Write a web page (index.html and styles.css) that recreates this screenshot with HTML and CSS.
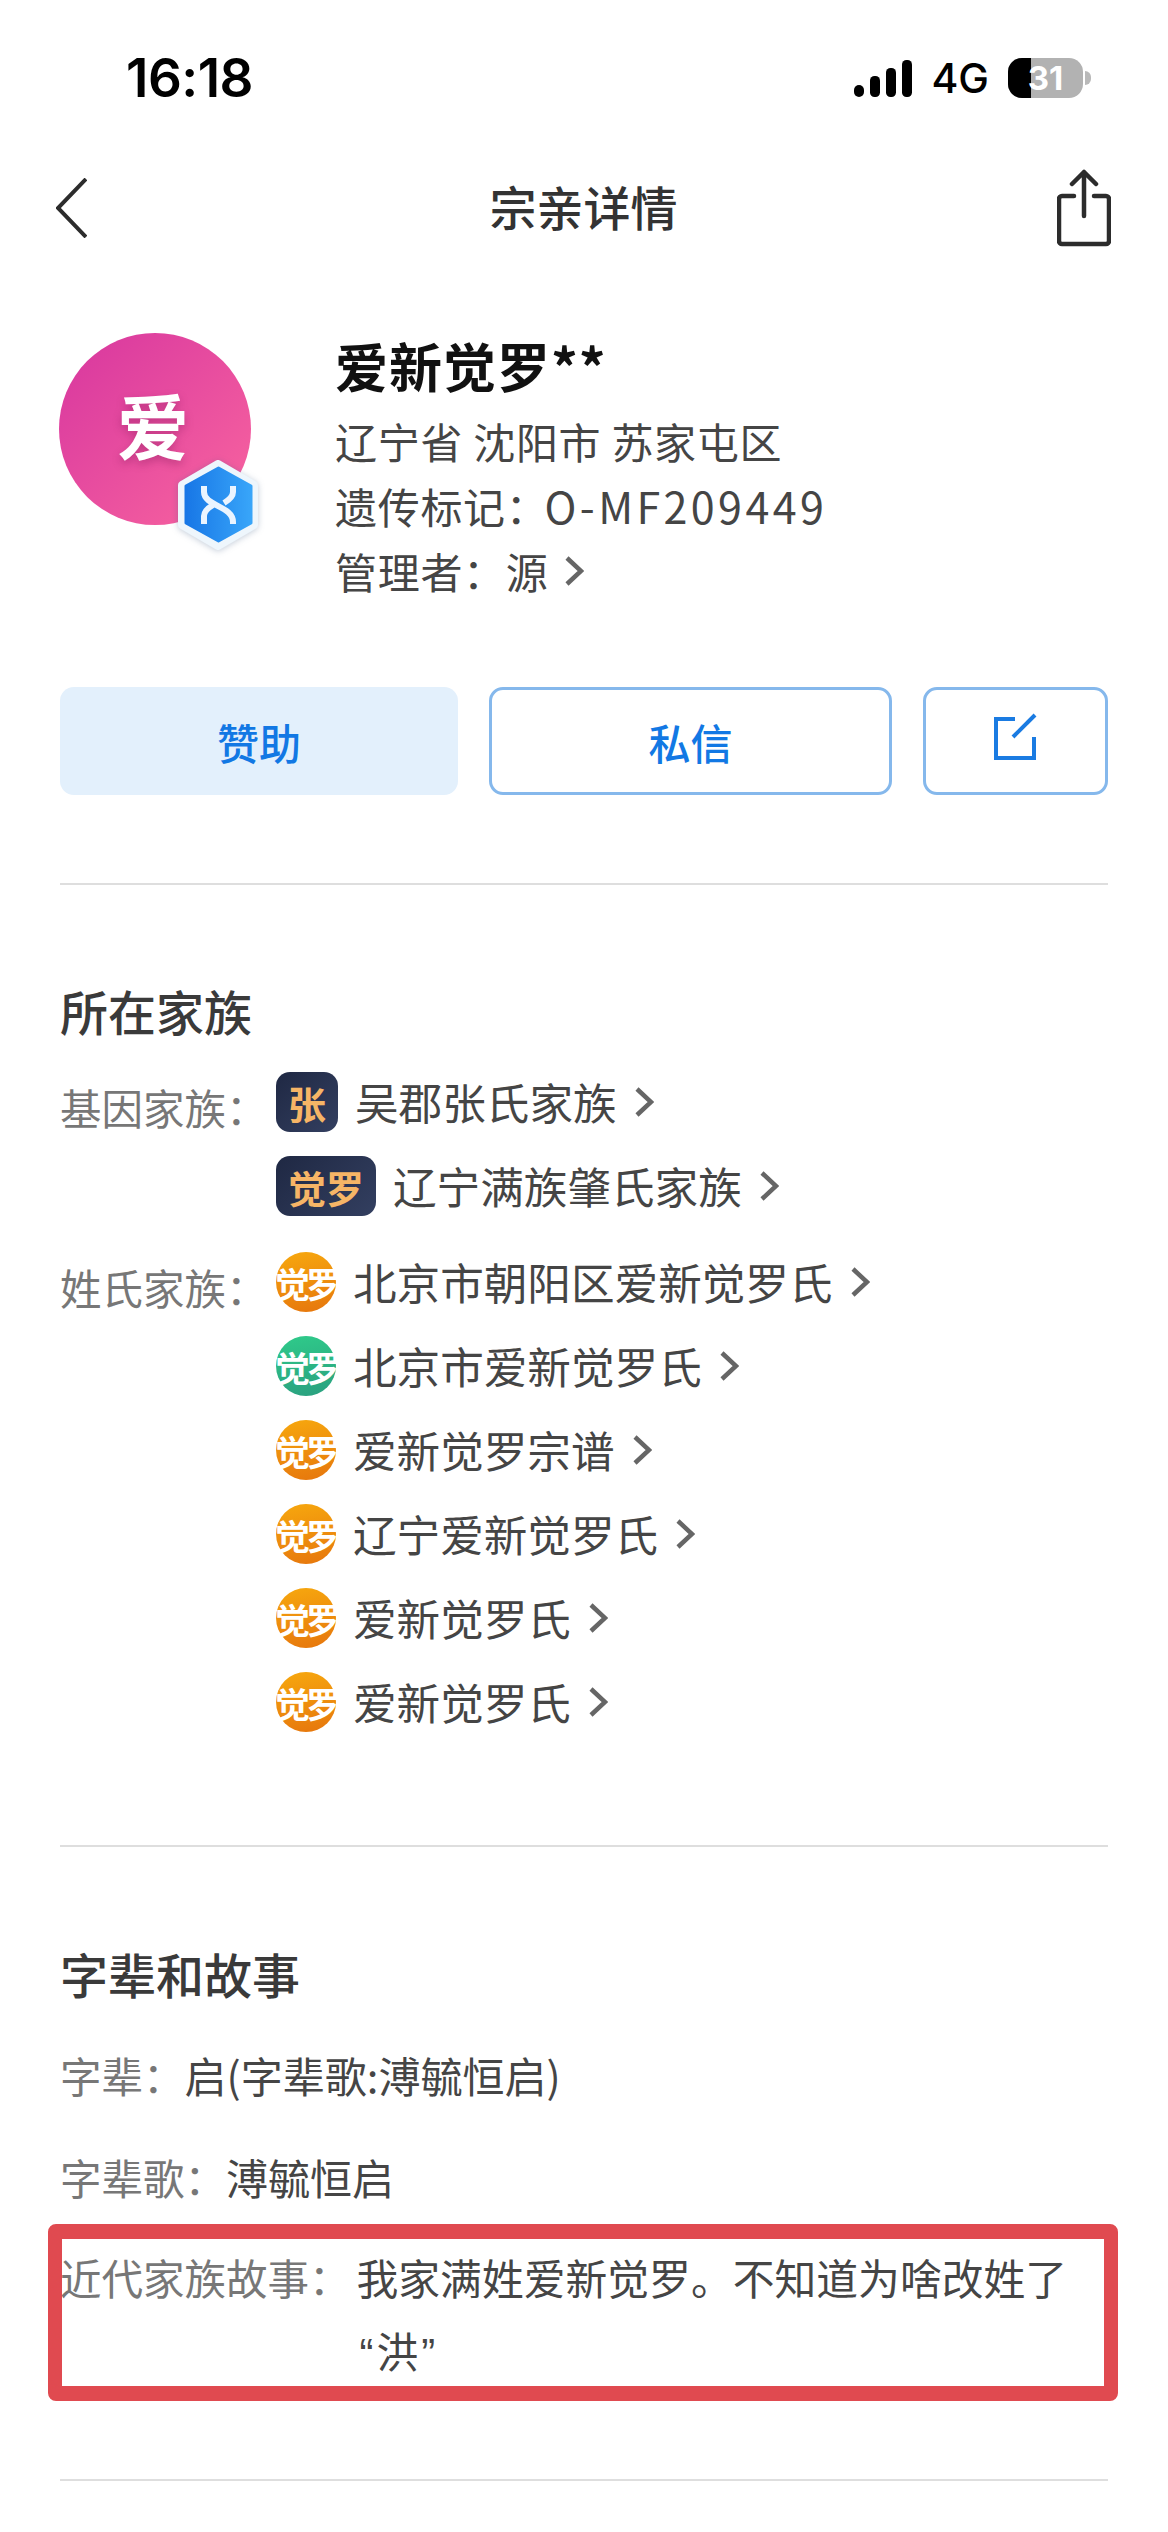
FILE: index.html
```html
<!DOCTYPE html>
<html lang="zh-CN">
<head>
  <meta charset="UTF-8">
  <meta name="viewport" content="width=device-width, initial-scale=1.0">
  <title>宗亲详情</title>
  <link rel="stylesheet" href="styles.css">
</head>
<body>
  <div class="status_bar">
    <span class="time">16:18</span>
    <div class="status_right">
      <svg class="signal" width="58" height="37" viewBox="0 0 58 37">
        <rect x="0" y="25" width="10" height="12" rx="5"/>
        <rect x="16" y="16" width="10" height="21" rx="4.5"/>
        <rect x="32" y="8" width="10" height="29" rx="4.5"/>
        <rect x="48" y="0" width="10" height="37" rx="4.5"/>
      </svg>
      <span class="net">4G</span>
      <div class="battery">
        <div class="battery_fill"></div>
        <span class="battery_num">31</span>
      </div>
      <span class="battery_nub"></span>
    </div>
  </div>

  <div class="nav">
    <svg class="back" width="31" height="60" viewBox="0 0 31 60">
      <polyline points="30,1 2,30 30,59"/>
    </svg>
    <h1 class="nav_title">宗亲详情</h1>
    <svg class="share" width="54" height="78" viewBox="0 0 54 78">
      <path d="M17 27H5a3 3 0 0 0-3 3v42a3 3 0 0 0 3 3h44a3 3 0 0 0 3-3V30a3 3 0 0 0-3-3H37"/>
      <path d="M27 3v44M15 15L27 3l12 12"/>
    </svg>
  </div>

  <div class="profile">
    <div class="avatar">
      <span class="avatar_text">爱</span>
      <svg class="avatar_badge" width="80" height="90" viewBox="0 0 80 90">
        <defs>
          <linearGradient id="hexBlue" x1="0" y1="0" x2="1" y2="0">
            <stop offset="0" stop-color="#1877e6"/>
            <stop offset="1" stop-color="#38a5f9"/>
          </linearGradient>
        </defs>
        <polygon class="hex_out" points="40,4 76,25 76,65 40,86 4,65 4,25"/>
        <polygon class="hex_in" points="40.5,8 73,26 73,63 40.5,81 8,63 8,26"/>
        <path class="hex_dna" d="M26 26v6c0 14 29 14 29 30v2"/>
        <path class="hex_dna" d="M55 26v6c0 5-4 8-9 11M26 64v-8c0-5 4-8 9-11"/>
      </svg>
    </div>
    <div class="info">
      <div class="name">爱新觉罗**</div>
      <div class="info_line first">辽宁省 沈阳市 苏家屯区</div>
      <div class="info_line">遗传标记：<span class="code">O-MF209449</span></div>
      <div class="info_line"><span>管理者：源</span><svg class="arrow" width="20" height="30" viewBox="0 0 20 30"><polyline points="3,2 17,15 3,28"/></svg></div>
    </div>
  </div>

  <div class="actions">
    <a class="btn btn_fill">赞助</a>
    <a class="btn btn_line btn_grow">私信</a>
    <a class="btn btn_line btn_icon">
      <svg width="44" height="48" viewBox="0 0 44 48">
        <path d="M21 6H2v39h38V24"/>
        <path d="M41 2L19 24"/>
      </svg>
    </a>
  </div>

  <div class="line line_first"></div>

  <h2 class="section_title">所在家族</h2>

  <div class="family_group gene">
    <div class="label">基因家族：</div>
    <div class="family_list">
      <div class="family_row">
        <span class="tag">张</span>
        <span class="family_name">吴郡张氏家族</span>
        <svg class="arrow" width="20" height="30" viewBox="0 0 20 30"><polyline points="3,2 17,15 3,28"/></svg>
      </div>
      <div class="family_row">
        <span class="tag">觉罗</span>
        <span class="family_name">辽宁满族肇氏家族</span>
        <svg class="arrow" width="20" height="30" viewBox="0 0 20 30"><polyline points="3,2 17,15 3,28"/></svg>
      </div>
    </div>
  </div>

  <div class="family_group surname">
    <div class="label">姓氏家族：</div>
    <div class="family_list">
      <div class="family_row">
        <span class="seal">觉罗</span>
        <span class="family_name">北京市朝阳区爱新觉罗氏</span>
        <svg class="arrow" width="20" height="30" viewBox="0 0 20 30"><polyline points="3,2 17,15 3,28"/></svg>
      </div>
      <div class="family_row">
        <span class="seal seal_green">觉罗</span>
        <span class="family_name">北京市爱新觉罗氏</span>
        <svg class="arrow" width="20" height="30" viewBox="0 0 20 30"><polyline points="3,2 17,15 3,28"/></svg>
      </div>
      <div class="family_row">
        <span class="seal">觉罗</span>
        <span class="family_name">爱新觉罗宗谱</span>
        <svg class="arrow" width="20" height="30" viewBox="0 0 20 30"><polyline points="3,2 17,15 3,28"/></svg>
      </div>
      <div class="family_row">
        <span class="seal">觉罗</span>
        <span class="family_name">辽宁爱新觉罗氏</span>
        <svg class="arrow" width="20" height="30" viewBox="0 0 20 30"><polyline points="3,2 17,15 3,28"/></svg>
      </div>
      <div class="family_row">
        <span class="seal">觉罗</span>
        <span class="family_name">爱新觉罗氏</span>
        <svg class="arrow" width="20" height="30" viewBox="0 0 20 30"><polyline points="3,2 17,15 3,28"/></svg>
      </div>
      <div class="family_row">
        <span class="seal">觉罗</span>
        <span class="family_name">爱新觉罗氏</span>
        <svg class="arrow" width="20" height="30" viewBox="0 0 20 30"><polyline points="3,2 17,15 3,28"/></svg>
      </div>
    </div>
  </div>

  <div class="line line_second"></div>

  <h2 class="section_title second">字辈和故事</h2>

  <div class="text_row"><span class="label">字辈：</span><span class="value">启(字辈歌:溥毓恒启)</span></div>
  <div class="text_row"><span class="label">字辈歌：</span><span class="value">溥毓恒启</span></div>
  <div class="story_row">
    <span class="label">近代家族故事：</span>
    <span class="value">我家满姓爱新觉罗。不知道为啥改姓了<span class="quote">“</span>洪<span class="quote">”</span></span>
    <div class="red_mark"></div>
  </div>

  <div class="line line_third"></div>
</body>
</html>
```

FILE: styles.css
```css
* {
  box-sizing: border-box;
}
html, body {
  margin: 0;
  padding: 0;
}
body {
  width: 1168px;
  height: 2532px;
  overflow: hidden;
  background-color: #fff;
  font-family: 'Noto Sans CJK SC', sans-serif;
  font-size: 42px;
  color: #454545;
}

/* status bar */
.status_bar {
  display: flex;
  justify-content: space-between;
  align-items: center;
  height: 156px;
  padding: 0 77px 0 126px;
  color: #000;
}
.time {
  font-family: Inter, sans-serif;
  font-size: 53px;
  font-weight: 600;
  letter-spacing: -.5px;
}
.status_right {
  display: flex;
  align-items: center;
}
.signal {
  fill: #000;
}
.net {
  margin-left: 19px;
  font-family: Inter, sans-serif;
  font-size: 41px;
  font-weight: 500;
  line-height: 40px;
}
.battery {
  position: relative;
  display: flex;
  justify-content: center;
  align-items: center;
  width: 75px;
  height: 40px;
  margin-left: 19px;
  border-radius: 14px;
  overflow: hidden;
  background-color: #b2b2b2;
}
.battery_fill {
  position: absolute;
  left: 0;
  top: 0;
  bottom: 0;
  width: 23px;
  background-color: #000;
}
.battery_num {
  position: relative;
  font-family: Inter, sans-serif;
  font-size: 33px;
  font-weight: 700;
  line-height: 40px;
  color: #fff;
}
.battery_nub {
  width: 6px;
  height: 14px;
  margin-left: 2px;
  border-radius: 0 7px 7px 0;
  background-color: #b9b9b9;
}

/* title bar */
.nav {
  display: grid;
  grid-template-columns: 1fr auto 1fr;
  align-items: center;
  height: 104px;
  padding: 0 57px 0 56px;
}
.nav_title {
  margin: -6px 0 0;
  font-size: 47px;
  font-weight: 500;
  color: #333;
}
.back {
  fill: none;
  stroke: #2c2c2c;
  stroke-width: 4;
}
.share {
  justify-self: end;
  fill: none;
  stroke: #2c2c2c;
  stroke-width: 4.5;
  stroke-linecap: round;
  stroke-linejoin: round;
}

/* profile */
.profile {
  display: flex;
  margin-top: 73px;
  padding: 0 60px 0 59px;
}
.avatar {
  position: relative;
  display: flex;
  justify-content: center;
  align-items: center;
  flex: none;
  width: 192px;
  height: 192px;
  margin-right: 84px;
  border-radius: 50%;
  background: linear-gradient(135deg, #d7369f, #f9659f);
}
.avatar_text {
  margin: -12px 4px 0 0;
  font-size: 72px;
  font-weight: 700;
  line-height: 1;
  color: #fff;
  text-shadow: 0 4px 8px rgba(120, 20, 80, .35);
}
.avatar_badge {
  position: absolute;
  left: 119px;
  top: 127px;
  overflow: visible;
  filter: drop-shadow(0 1px 3px rgba(60, 90, 130, .3));
}
.hex_out {
  fill: #eef6fc;
  stroke: #eef6fc;
  stroke-width: 8;
  stroke-linejoin: round;
}
.hex_in {
  fill: url(#hexBlue);
  stroke: url(#hexBlue);
  stroke-width: 3;
  stroke-linejoin: round;
}
.hex_dna {
  fill: none;
  stroke: #eaf4ff;
  stroke-width: 6;
}
.name {
  margin-top: -4px;
  font-size: 53px;
  font-weight: 700;
  line-height: 72px;
  letter-spacing: 1px;
  color: #111;
}
.info_line {
  display: flex;
  align-items: center;
  line-height: 65px;
  letter-spacing: .7px;
  white-space: pre;
}
.info_line.first {
  margin-top: 7px;
}
.code {
  margin-left: -4px;
  font-size: 43px;
  letter-spacing: 3.4px;
}
.arrow {
  flex: none;
  fill: none;
  stroke: #666;
  stroke-width: 4.5;
}
.info_line .arrow {
  margin-left: 15px;
}

/* buttons */
.actions {
  display: flex;
  gap: 31px;
  margin-top: 84px;
  padding: 0 60px;
}
.btn {
  display: flex;
  justify-content: center;
  align-items: center;
  height: 108px;
  border-radius: 14px;
  font-size: 42px;
  font-weight: 500;
  color: #1278e4;
}
.btn_fill {
  width: 398px;
  background-color: #e3f0fc;
}
.btn_line {
  border: 3px solid #85b8ec;
}
.btn_grow {
  flex: 1;
}
.btn_icon {
  width: 185px;
}
.btn_icon svg {
  margin-top: -8px;
  fill: none;
  stroke: #1a7be2;
  stroke-width: 4;
}

.line {
  height: 2px;
  margin: 0 60px;
  background-color: #dedede;
}
.line_first {
  margin-top: 88px;
}
.line_second {
  margin-top: 113px;
}
.line_third {
  margin-top: 89px;
}

.section_title {
  margin: 95px 60px 0;
  font-size: 48px;
  font-weight: 500;
  line-height: 60px;
  color: #3a3a3a;
}
.section_title.second {
  margin-top: 96px;
}

/* family lists */
.family_group {
  display: flex;
  padding: 0 60px;
}
.gene {
  margin-top: 32px;
}
.surname {
  margin-top: 36px;
}
.label {
  font-size: 41.5px;
  color: #777;
  white-space: nowrap;
}
.family_group .label {
  width: 216px;
  flex: none;
  margin-top: 5px;
  line-height: 60px;
}
.family_list {
  display: flex;
  flex-direction: column;
  gap: 24px;
}
.family_row {
  display: flex;
  align-items: center;
  height: 60px;
}
.family_name {
  margin: 0 0 3px 17px;
  font-size: 43.6px;
  white-space: nowrap;
}
.family_row .arrow {
  margin-left: 17px;
}
.tag {
  display: flex;
  justify-content: center;
  align-items: center;
  min-width: 62px;
  height: 60px;
  padding: 0 12px;
  border-radius: 14px;
  background: linear-gradient(135deg, #1f2843, #333f60);
  font-size: 38px;
  font-weight: 700;
  color: #f6b566;
}
.seal {
  display: flex;
  justify-content: center;
  align-items: center;
  flex: none;
  width: 60px;
  height: 60px;
  border-radius: 50%;
  background: linear-gradient(170deg, #f7a80e, #e6760d);
  font-size: 35px;
  font-weight: 700;
  line-height: 1;
  letter-spacing: -4px;
  color: #fff;
  white-space: nowrap;
}
.seal_green {
  background: linear-gradient(170deg, #2fcb8a, #2a9f7f);
}

/* text rows */
.text_row {
  display: flex;
  margin-top: 42px;
  padding: 0 60px;
  line-height: 60px;
}
.story_row {
  position: relative;
  display: flex;
  gap: 6px;
  margin: 34px 60px 0;
  line-height: 73px;
}
.story_row .value {
  flex: 1;
  font-size: 41.8px;
}
.quote {
  padding: 0 3px;
  font-family: 'Liberation Sans', sans-serif;
}
/* annotation drawn over the row */
.red_mark {
  position: absolute;
  left: -12px;
  right: -10px;
  top: -17px;
  bottom: -11px;
  border: solid #e04a50;
  border-width: 15px 14px;
  border-radius: 8px;
}
```
